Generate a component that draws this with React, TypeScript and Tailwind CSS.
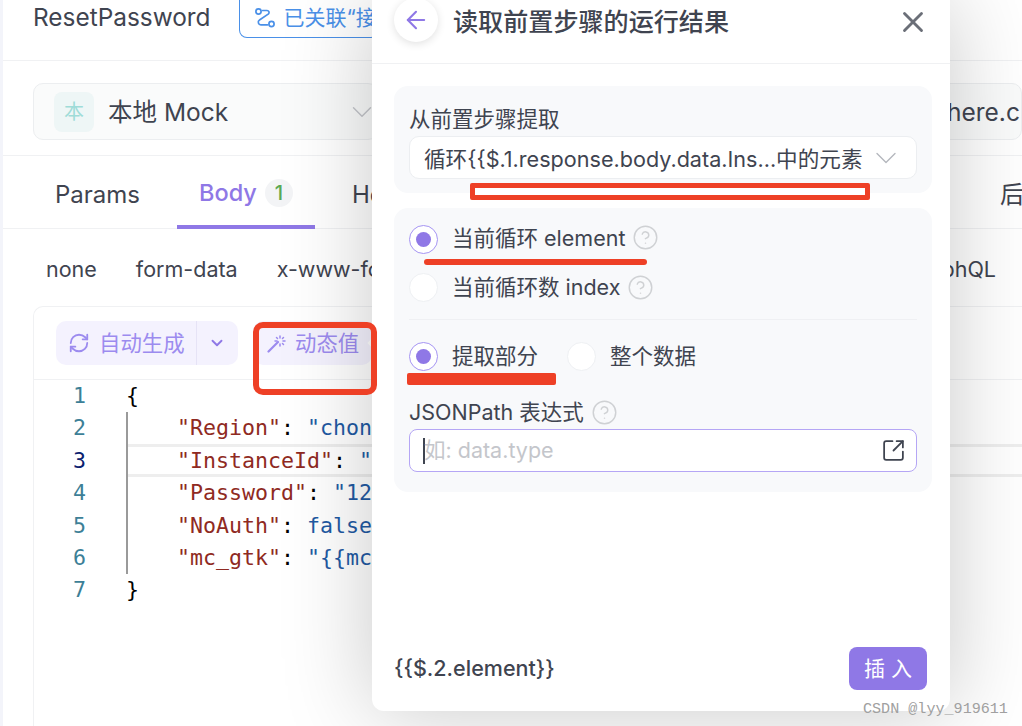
import React from "react";
import {
  ArrowLeft,
  ChevronDown,
  CircleHelp,
  RefreshCw,
  SquareArrowOutUpRight,
  X,
} from "lucide-react";

const sans = "font-['Inter','Noto_Sans_CJK_SC',sans-serif]";

const Radio = ({ on }: { on?: boolean }) => (
  <span
    className={
      on
        ? "flex h-[29px] w-[29px] shrink-0 items-center justify-center rounded-full border border-[#a594f3] bg-white"
        : "flex h-[29px] w-[29px] shrink-0 items-center justify-center rounded-full border border-[#eef0f3] bg-white"
    }
  >
    {on && <span className="h-[15px] w-[15px] rounded-full bg-[#8f78e6]" />}
  </span>
);

const Help = () => (
  <CircleHelp className="h-[27px] w-[27px] text-[#cfd1d4]" strokeWidth={1.3} />
);

const LinkIcon = () => (
  <svg viewBox="0 0 20 20" className="h-[20px] w-[20px]" fill="none" stroke="currentColor" strokeWidth="1.7">
    <circle cx="3.5" cy="3.5" r="2.6" />
    <circle cx="16.5" cy="16" r="2.6" />
    <path d="M7.5 2.5h4.5a2 2 0 0 1 1.5 3.4L4.5 12a2.6 2.6 0 0 0 1.5 4.8h6.5" strokeLinecap="round" />
  </svg>
);

const WandIcon = () => (
  <svg viewBox="0 0 20 20" className="h-[20px] w-[20px]" fill="none" stroke="currentColor" strokeLinecap="round">
    <path d="M1.5 18.5 11 9" strokeWidth="2.2" />
    <path d="M13 3v2M13 11v2M8 8h2M16 8h2M9.5 4.5l1 1M15.5 10.5l1 1M16.5 4.5l-1 1" strokeWidth="1.5" />
  </svg>
);

const Key = ({ children }: { children: React.ReactNode }) => (
  <span className="text-[#8f2a22]">{children}</span>
);
const Val = ({ children }: { children: React.ReactNode }) => (
  <span className="text-[#1f5aa3]">{children}</span>
);

const App = () => {
  return (
    <div
      className={`${sans} relative h-[726px] w-[1022px] overflow-hidden bg-white text-[#3f4450]`}
    >
      {/* page behind the drawer */}
      <div className="flex h-full flex-col border-l-[3px] border-[#f3f4fa]">
        <div className="flex h-[61px] shrink-0 items-start gap-[28px] border-b border-[#f0f1f3] pl-[30px]">
          <span className="mt-[1px] text-[24.4px] leading-[32px]">ResetPassword</span>
          <span className="flex h-[38px] w-[140px] items-center gap-[9px] overflow-hidden rounded-b-[8px] border border-t-0 border-[#4a90e8] pb-[2px] pl-[15px] text-[21px] whitespace-nowrap text-[#4a90e8]">
            <LinkIcon />
            已关联“接
          </span>
        </div>

        <div className="flex h-[95px] shrink-0 items-start gap-[10px] border-b border-[#f0f1f3] pt-[22px] pl-[30px]">
          <div className="flex h-[57px] w-[345px] shrink-0 items-center rounded-[10px] border border-[#eceef0] bg-[#fafbfb] pl-[20px]">
            <span className="flex h-[40px] w-[40px] items-center justify-center rounded-[8px] bg-[#eef6f6] text-[20px] text-[#9fdcd8]">
              本
            </span>
            <span className="mt-[2px] ml-[14px] text-[24.5px]">本地 Mock</span>
            <ChevronDown className="mr-[-2px] ml-auto h-[34px] w-[34px] text-[#c4c6cb]" strokeWidth={1} />
          </div>
          <div className="flex h-[57px] flex-1 items-center overflow-hidden rounded-[10px] border border-[#eceef0] bg-[#fafbfb] pt-[2px] text-[24.5px] whitespace-nowrap">
            <span className="ml-[558px] shrink-0">here.c</span>
          </div>
        </div>

        <div className="flex h-[73px] shrink-0 items-start border-b border-[#f0f1f3] pl-[52px] text-[24px]">
          <span className="pt-[21px]">Params</span>
          <span className="ml-[37px] flex h-[73px] w-[138px] items-center gap-[8px] border-b-4 border-[#8f78e6] pt-[4px] pl-[22px] text-[23.5px] font-medium text-[#8f78e6]">
            Body
            <span className="flex h-[28px] w-[28px] items-center justify-center rounded-full bg-[#f3f4f6] text-[20px] text-[#5aa954]">
              1
            </span>
          </span>
          <span className="ml-[37px] pt-[21px]">He</span>
          <span className="mr-[-2px] ml-auto pt-[21px] whitespace-nowrap">后</span>
        </div>

        <div className="flex h-[77px] shrink-0 items-start justify-between pt-[24px] pr-[26px] pl-[43px] text-[21.5px]">
          <div className="flex gap-[39px]">
            <span>none</span>
            <span>form-data</span>
            <span>x-www-fo</span>
          </div>
          <span>phQL</span>
        </div>

        <div className="ml-[30px] flex-1 rounded-tl-[10px] border-t border-l border-[#f0f1f3]">
          <div className="flex h-[73px] items-start gap-[15px] border-b border-[#f0f1f3] pt-[14px] pl-[22px] text-[21.4px] text-[#9c8bef]">
            <div className="flex h-[44px] w-[182px] items-center rounded-[10px] bg-[#f4f2fe]">
              <RefreshCw className="ml-[12px] h-[22px] w-[22px]" strokeWidth={2} />
              <span className="ml-[9px]">自动生成</span>
              <span className="ml-[11px] flex h-[44px] flex-1 items-center justify-center border-l border-[#e6e3f6]">
                <ChevronDown className="h-[18px] w-[18px] text-[#8f78e6]" strokeWidth={2.5} />
              </span>
            </div>
            <div className="relative flex h-[44px] w-[119px] items-center rounded-[10px] bg-[#f4f2fe]">
              <span className="ml-[14px]">
                <WandIcon />
              </span>
              <span className="ml-[8px]">动态值</span>
              <span className="absolute top-[18px] right-[-5px] h-[8px] w-[8px] rotate-45 bg-white" />
            </div>
          </div>

          <div className="font-['DejaVu_Sans_Mono',monospace] text-[21.6px] leading-[32.4px] whitespace-pre text-black">
            <div className="flex h-[32.4px]">
              <span className="w-[52px] text-right text-[#3d7f97]">1</span>
              <span className="ml-[40px]">{"{"}</span>
            </div>
            <div className="flex">
              <div className="w-[52px] text-right text-[#3d7f97]">
                <div>2</div>
                <div className="text-[#0b216f]">3</div>
                <div>4</div>
                <div>5</div>
                <div>6</div>
              </div>
              <div className="ml-[40px] flex-1 border-l-2 border-[#9a9a9a] pl-[49px]">
                <div>
                  <Key>"Region"</Key>: <Val>"chon</Val>
                </div>
                <div className="relative">
                  <span className="absolute top-0 right-0 -left-[49px] h-[3px] -translate-y-[1px] bg-[#eeeeee]" />
                  <Key>"InstanceId"</Key>: <Val>"</Val>
                  <span className="absolute right-0 bottom-0 -left-[49px] h-[3px] bg-[#eeeeee]" />
                </div>
                <div>
                  <Key>"Password"</Key>: <Val>"12</Val>
                </div>
                <div>
                  <Key>"NoAuth"</Key>: <Val>false</Val>
                </div>
                <div>
                  <Key>"mc_gtk"</Key>: <Val>"{"{{mc"}</Val>
                </div>
              </div>
            </div>
            <div className="flex h-[32.4px]">
              <span className="w-[52px] text-right text-[#3d7f97]">7</span>
              <span className="ml-[40px]">{"}"}</span>
            </div>
          </div>
        </div>
      </div>

      {/* drawer */}
      <div className="absolute top-0 left-[372px] flex h-[711px] w-[578px] flex-col rounded-b-[12px] bg-white shadow-[0_0_90px_rgba(0,0,0,0.22)]">
        <div className="flex h-[64px] shrink-0 items-start border-b border-[#f0f1f3] pl-[22px]">
          <span className="-mt-[2px] flex h-[44px] w-[44px] items-center justify-center rounded-full bg-white shadow-[0_2px_8px_rgba(0,0,0,0.12)]">
            <ArrowLeft className="h-[28px] w-[28px] text-[#8f78e6]" strokeWidth={1.8} />
          </span>
          <span className="ml-[15px] text-[25.1px] leading-[44px] font-medium whitespace-nowrap">
            读取前置步骤的运行结果
          </span>
          <X className="mt-[5px] mr-[20px] ml-auto h-[34px] w-[34px] text-[#6b6f78]" strokeWidth={2} />
        </div>

        <div className="mt-[22px] mr-[18px] ml-[22px] flex h-[107px] flex-col rounded-[14px] bg-[#f8f9fb] px-[15px] pt-[17px]">
          <span className="h-[33px] text-[21.5px] leading-[32px]">从前置步骤提取</span>
          <div className="flex h-[43px] items-center justify-between rounded-[10px] border border-[#eceef1] bg-white pr-[12px] pl-[14px] text-[21.6px] whitespace-nowrap">
            <span className="pt-[4px]">循环{"{{"}$.1.response.body.data.Ins...中的元素</span>
            <ChevronDown className="h-[36px] w-[36px] text-[#b4b7bd]" strokeWidth={0.9} />
          </div>
        </div>

        <div className="mt-[15px] mr-[18px] ml-[22px] flex h-[284px] flex-col rounded-[14px] bg-[#f8f9fb] px-[15px] pt-[16px] text-[21.5px]">
          <div className="flex h-[30px] items-center gap-[14px]">
            <Radio on />
            <span className="flex -translate-y-[1px] items-center gap-[7px]">
              当前循环 element
              <span className="-translate-y-[1px]">
                <Help />
              </span>
            </span>
          </div>
          <div className="mt-[18px] flex h-[30px] items-center gap-[14px]">
            <Radio />
            <span className="flex items-center gap-[7px]">
              当前循环数 index
              <Help />
            </span>
          </div>
          <div className="mt-[17px] border-t border-[#eff0f3]" />
          <div className="mt-[21px] flex h-[30px] items-center">
            <Radio on />
            <span className="ml-[14px]">提取部分</span>
            <span className="ml-[29px]">
              <Radio />
            </span>
            <span className="ml-[14px]">整个数据</span>
          </div>
          <div className="mt-[26px] flex h-[30px] items-center gap-[7px]">
            JSONPath 表达式
            <Help />
          </div>
          <div className="mt-[2px] flex h-[43px] items-center rounded-[8px] border border-[#b5a6f5] bg-white pr-[10px] pl-[13px]">
            <span className="h-[26px] w-[2px] bg-[#3f4450]" />
            <span className="-ml-[1px] text-[#c4c6cb]">如: data.type</span>
            <SquareArrowOutUpRight className="ml-auto h-[25px] w-[25px] text-[#3f4450]" strokeWidth={1.7} />
          </div>
        </div>

        <div className="mt-auto flex items-center justify-between pr-[23px] pb-[21px] pl-[22px]">
          <span className="text-[21.5px] font-medium">{"{{$.2.element}}"}</span>
          <span className="flex h-[43px] w-[78px] items-center justify-center rounded-[8px] bg-[#8f78e6] text-[21px] text-white">
            插 入
          </span>
        </div>
      </div>

      {/* red markup drawn on top of the screenshot */}
      <div className="absolute top-[322px] left-[253px] h-[73px] w-[124px] rounded-[10px] border-[6px] border-[#ee4026]" />
      <div className="absolute top-[183px] left-[470px] h-[17px] w-[400px] rounded-[2px] border-[5px] border-[#ee4026] bg-white" />
      <div className="absolute top-[259px] left-[424px] h-[6px] w-[223px] rounded-full bg-[#ee4026]" />
      <div className="absolute top-[373px] left-[407px] h-[12px] w-[149px] rounded-[2px] bg-[#ee4026]" />

      <span className="absolute top-[698px] left-[863px] font-['Liberation_Mono',monospace] text-[15.1px] text-[#a0a0a0]">
        CSDN @lyy_919611
      </span>
    </div>
  );
};

export default App;
